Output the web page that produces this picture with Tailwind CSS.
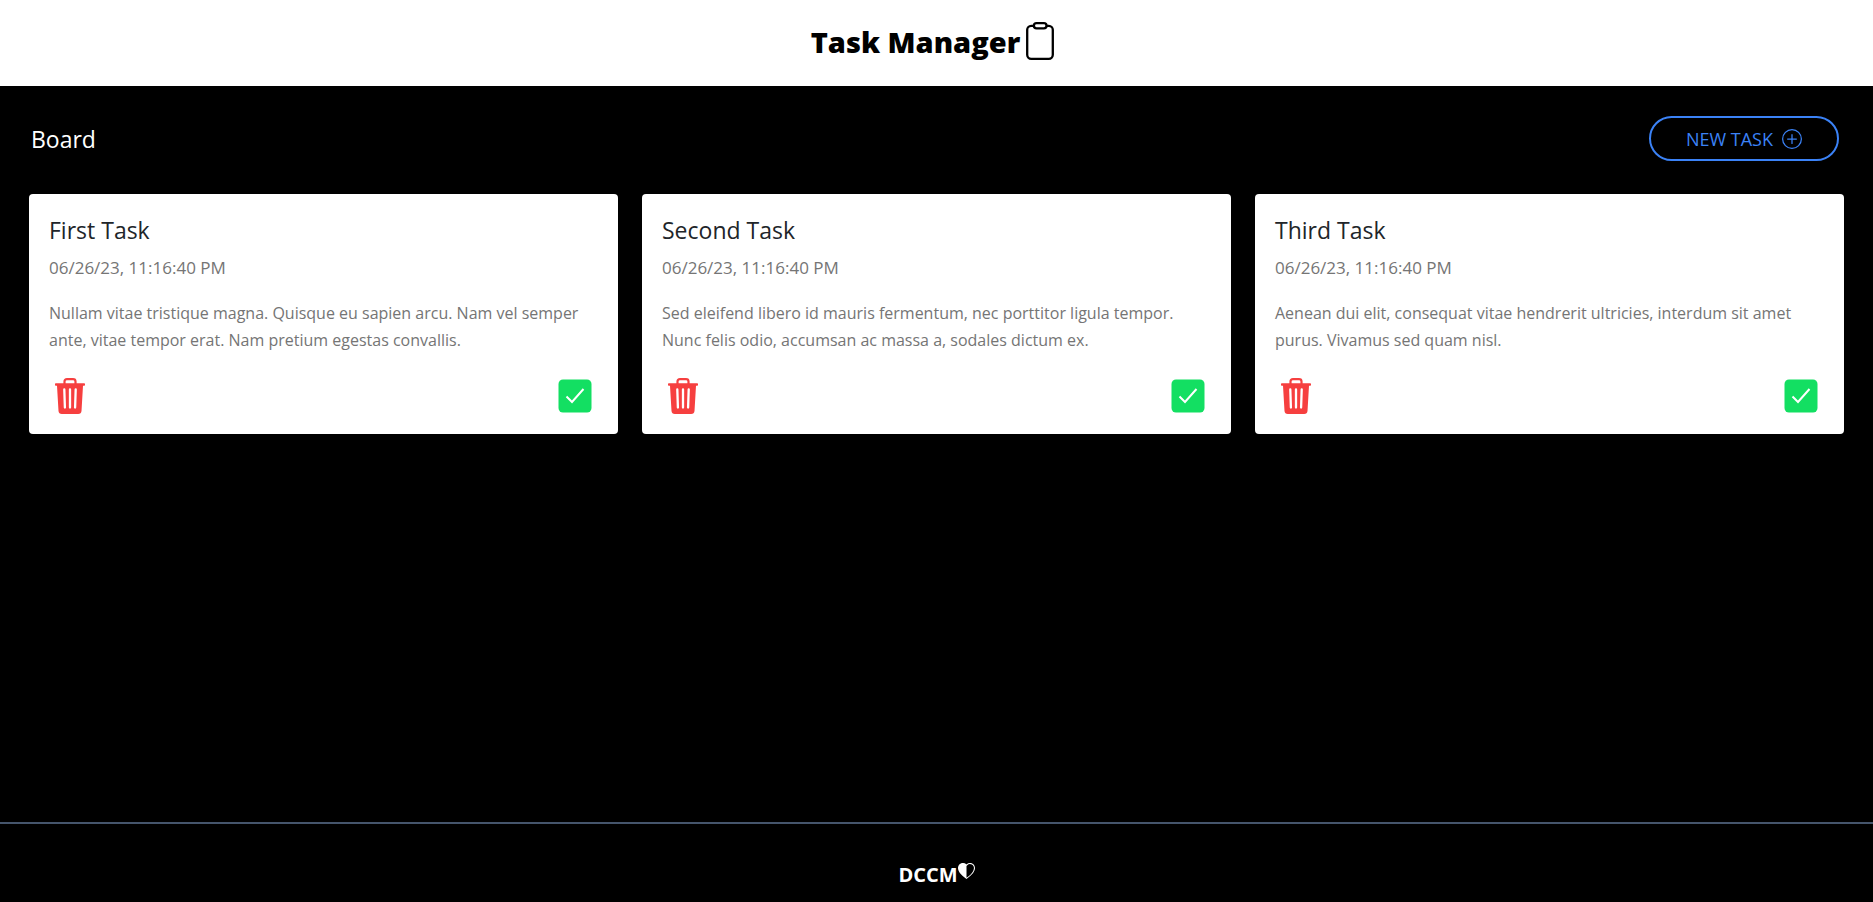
<!DOCTYPE html>
<html lang="en">
<head>
<meta charset="utf-8">
<title>Task Manager</title>
<script src="https://cdn.jsdelivr.net/npm/@tailwindcss/browser@4"></script>
</head>
<body class="flex min-h-screen flex-col bg-black font-['Open_Sans','Noto_Sans',sans-serif] text-[17px] text-white">
<svg class="hidden" aria-hidden="true">
  <symbol id="trash" viewBox="0 0 30 36"><path d="M9.500 6V3.500Q9.500 1.200 12 1.200H18Q20.500 1.200 20.500 3.500V6" fill="none" stroke="currentColor" stroke-width="2.200"/><path d="M.8 5.200H29.200Q30 5.200 30 6V7Q30 7.800 29.200 7.800H28L26.500 33Q26.200 36 23.200 36H6.800Q3.800 36 3.500 33L2 7.800H.8Q0 7.800 0 7V6Q0 5.200.8 5.200Z"/><path d="M9.300 11.500L9.900 29.500M15 11.500V29.500M20.700 11.500L20.100 29.500" stroke="#fff" stroke-width="2.300" stroke-linecap="round"/></symbol>
  <symbol id="check" viewBox="0 0 34 34"><rect x=".5" y=".5" width="33" height="33" rx="4.5" fill="currentColor"/><path d="M8.500 17.500l5.500 5.500L25.500 10" fill="none" stroke="#fff" stroke-width="2"/></symbol>
</svg>
<header class="flex h-[86px] items-center justify-center gap-[6px] bg-white pr-2 pb-1 text-black">
  <h1 class="pt-[2px] text-[29px] leading-10 font-extrabold">Task Manager</h1>
  <svg class="h-[38px] w-7" viewBox="0 0 28 38" fill="none" stroke="currentColor" stroke-width="2.300" aria-hidden="true"><rect x="1.200" y="3.800" width="25.600" height="33" rx="4"/><rect x="7.900" y="1.200" width="12.600" height="5.200" rx="2.600" fill="#fff"/></svg>
</header>
<main class="flex-1 px-[29px] pt-[30px]">
  <div class="mb-[33px] flex items-center justify-between pr-[5px] pl-[2px]">
    <h2 class="text-[23px] leading-8">Board</h2>
    <button type="button" class="flex h-[45px] items-center gap-[9px] rounded-full border-2 border-[#3b82f6] px-[35px] text-lg text-[#3b82f6]">NEW TASK
      <svg class="size-5" viewBox="0 0 16 16" fill="currentColor" aria-hidden="true"><path d="M8 15A7 7 0 1 1 8 1a7 7 0 0 1 0 14m0 1A8 8 0 1 0 8 0a8 8 0 0 0 0 16"/><path d="M8 4a.5.5 0 0 1 .5.5v3h3a.5.5 0 0 1 0 1h-3v3a.5.5 0 0 1-1 0v-3h-3a.5.5 0 0 1 0-1h3v-3A.5.5 0 0 1 8 4"/></svg>
    </button>
  </div>
  <div class="grid grid-cols-3 gap-6">
    <article class="rounded-[4px] bg-white p-5 text-[#757575]">
      <h3 class="text-[23px] leading-8 text-[#212529]">First Task</h3>
      <p class="mt-2 leading-[27px]">06/26/23, 11:16:40 PM</p>
      <p class="mt-[19px] text-base leading-[27px]">Nullam vitae tristique magna. Quisque eu sapien arcu. Nam vel semper ante, vitae tempor erat. Nam pretium egestas convallis.</p>
      <div class="mt-6 flex items-center justify-between px-[6px]">
        <button type="button" aria-label="Delete First Task" class="text-[#f63f3f]"><svg class="h-9 w-[30px]" fill="currentColor"><use href="#trash"/></svg></button>
        <button type="button" aria-label="Complete First Task" class="text-[#13df62]"><svg class="size-[34px]"><use href="#check"/></svg></button>
      </div>
    </article>
    <article class="rounded-[4px] bg-white p-5 text-[#757575]">
      <h3 class="text-[23px] leading-8 text-[#212529]">Second Task</h3>
      <p class="mt-2 leading-[27px]">06/26/23, 11:16:40 PM</p>
      <p class="mt-[19px] text-base leading-[27px]">Sed eleifend libero id mauris fermentum, nec porttitor ligula tempor. Nunc felis odio, accumsan ac massa a, sodales dictum ex.</p>
      <div class="mt-6 flex items-center justify-between px-[6px]">
        <button type="button" aria-label="Delete Second Task" class="text-[#f63f3f]"><svg class="h-9 w-[30px]" fill="currentColor"><use href="#trash"/></svg></button>
        <button type="button" aria-label="Complete Second Task" class="text-[#13df62]"><svg class="size-[34px]"><use href="#check"/></svg></button>
      </div>
    </article>
    <article class="rounded-[4px] bg-white p-5 text-[#757575]">
      <h3 class="text-[23px] leading-8 text-[#212529]">Third Task</h3>
      <p class="mt-2 leading-[27px]">06/26/23, 11:16:40 PM</p>
      <p class="mt-[19px] text-base leading-[27px]">Aenean dui elit, consequat vitae hendrerit ultricies, interdum sit amet purus. Vivamus sed quam nisl.</p>
      <div class="mt-6 flex items-center justify-between px-[6px]">
        <button type="button" aria-label="Delete Third Task" class="text-[#f63f3f]"><svg class="h-9 w-[30px]" fill="currentColor"><use href="#trash"/></svg></button>
        <button type="button" aria-label="Complete Third Task" class="text-[#13df62]"><svg class="size-[34px]"><use href="#check"/></svg></button>
      </div>
    </article>
  </div>
</main>
<footer class="flex h-20 justify-center border-t-2 border-slate-600 pt-[39px]">
  <p class="text-[20px] leading-6 font-bold">DCCM</p>
  <svg class="size-[17px]" viewBox="0 0 16 16" fill="currentColor" aria-hidden="true"><path d="M8 2.748v11.047c3.452-2.368 5.365-4.542 6.286-6.357.955-1.886.838-3.362.314-4.385C13.486.878 10.400.280 8.717 2.010zM8 15C-7.333 4.868 3.279-3.040 7.824 1.143q.09.083.176.171a3 3 0 0 1 .176-.170C12.720-3.042 23.333 4.867 8 15"/></svg>
</footer>
</body>
</html>
